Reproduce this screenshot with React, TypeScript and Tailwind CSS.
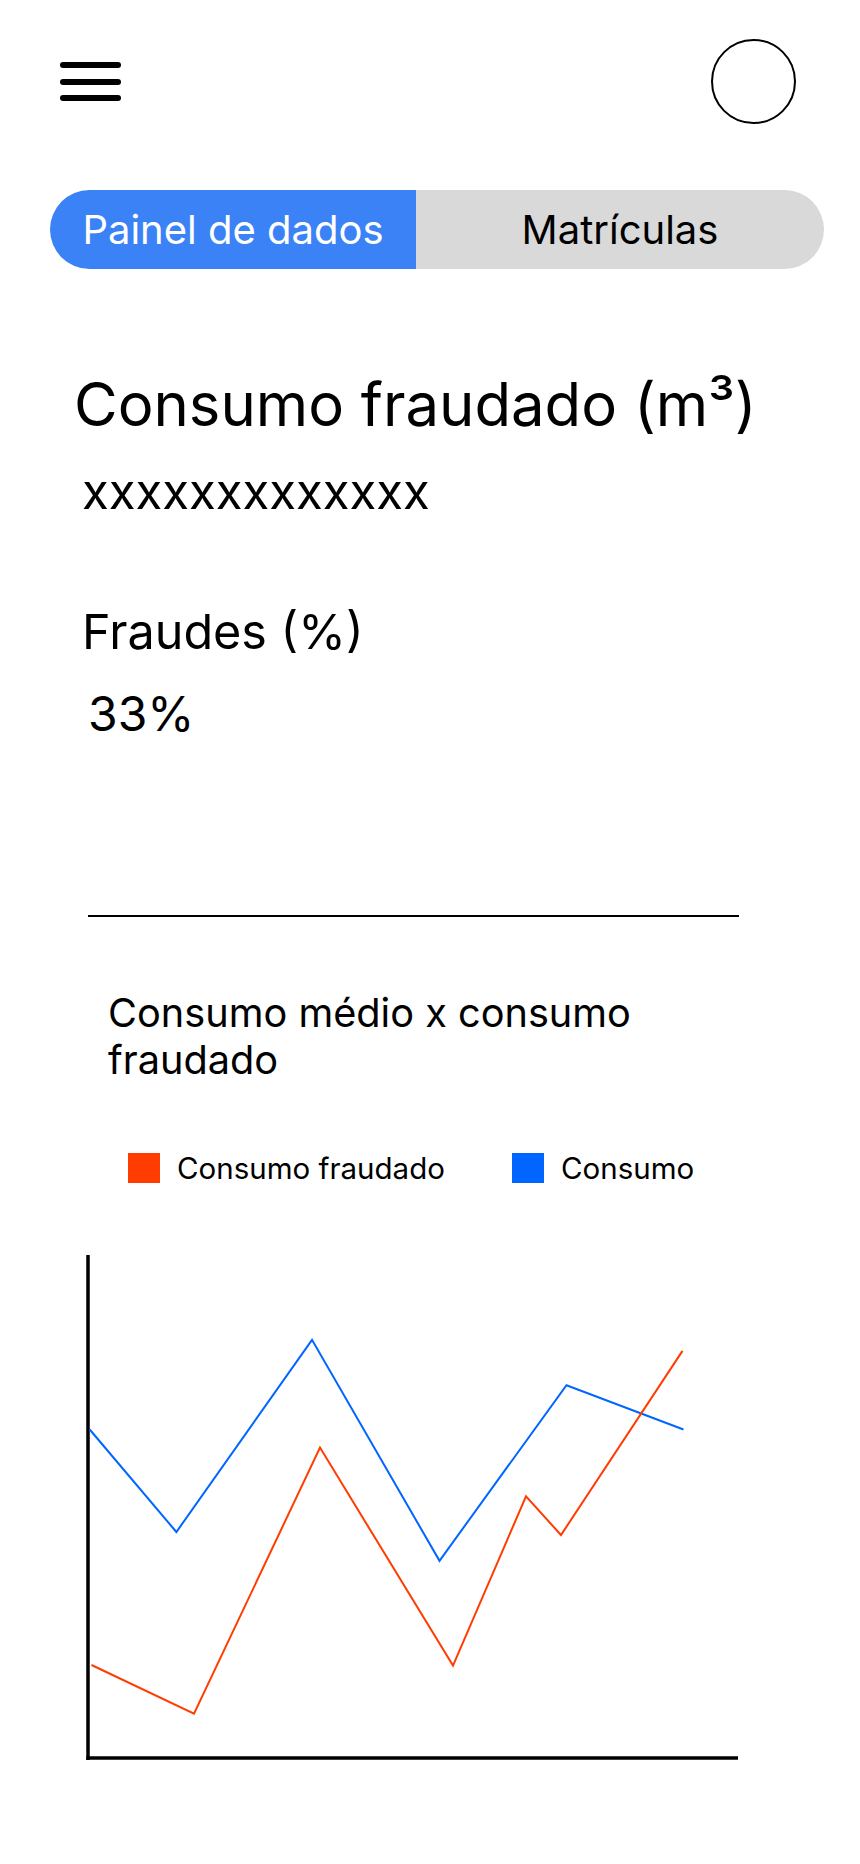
const consumo = [
  [3.7, 174.5],
  [90.4, 277],
  [226, 84.8],
  [353.5, 305.8],
  [480.5, 130.2],
  [597.5, 174.5],
];

const fraudado = [
  [5.5, 410],
  [108, 458.6],
  [234, 192.6],
  [367, 410.6],
  [440, 241.3],
  [475, 280],
  [596.5, 95.9],
];

const toPoints = (pts: number[][]) => pts.map(([x, y]) => `${x},${y}`).join(' ');

function Chart() {
  return (
    <svg width="658" height="510" viewBox="0 0 658 510" className="block">
      {/* eixos */}
      <line x1="2" y1="0" x2="2" y2="505" stroke="#000" strokeWidth="3.5" />
      <line x1="0.3" y1="503" x2="652" y2="503" stroke="#000" strokeWidth="3.5" />
      <polyline points={toPoints(consumo)} fill="none" stroke="#0066FF" strokeWidth="2" strokeLinejoin="miter" />
      <polyline points={toPoints(fraudado)} fill="none" stroke="#FF3D00" strokeWidth="2" strokeLinejoin="miter" />
    </svg>
  );
}

export default function App() {
  return (
    <div className="w-[860px] min-h-[1864px] bg-white text-black font-['Inter',sans-serif] pb-[100px]">
      {/* Header */}
      <header className="flex items-center justify-between pl-[60px] pr-[64px] pt-[39px]">
        <button className="flex flex-col gap-[10.5px]">
          <span className="block h-[6px] w-[61px] rounded-full bg-black" />
          <span className="block h-[6px] w-[61px] rounded-full bg-black" />
          <span className="block h-[6px] w-[61px] rounded-full bg-black" />
        </button>
        <div className="h-[85px] w-[85px] rounded-full border-2 border-black" />
      </header>

      {/* Tabs */}
      <div className="mt-[66px] ml-[50px] flex h-[79px] w-[774px] text-[40px]">
        <div className="flex w-[366px] items-center justify-center rounded-l-full bg-[#3b82f6] text-white">
          Painel de dados
        </div>
        <div className="flex flex-1 items-center justify-center rounded-r-full bg-[#d9d9d9] text-black">
          Matrículas
        </div>
      </div>

      {/* Indicadores */}
      <h1 className="mt-[99px] pl-[74px] text-[59.8px] leading-[73px]">Consumo fraudado (m³)</h1>
      <p className="mt-[22px] pl-[82px] text-[49px] leading-[58px]">xxxxxxxxxxxxx</p>

      <h2 className="mt-[82px] pl-[82px] text-[48.5px] leading-[58px]">Fraudes (%)</h2>
      <p className="mt-[24px] pl-[88px] text-[48px] leading-[58px]">33%</p>

      <div className="mt-[172px] ml-[88px] h-[2px] w-[651px] bg-black" />

      {/* Gráfico */}
      <h3 className="mt-[73px] ml-[108px] w-[600px] text-[39.7px] leading-[47px]">
        Consumo médio x consumo fraudado
      </h3>

      <div className="mt-[69px] flex items-center pl-[128px] text-[29.5px] leading-[30px]">
        <div className="flex w-[384px] items-center gap-[17px]">
          <span className="block h-[30px] w-[32px] bg-[#FF3D00]" />
          <span>Consumo fraudado</span>
        </div>
        <div className="flex items-center gap-[17px]">
          <span className="block h-[30px] w-[32px] bg-[#0066FF]" />
          <span>Consumo</span>
        </div>
      </div>

      <div className="mt-[72px] ml-[86px]">
        <Chart />
      </div>
    </div>
  );
}
